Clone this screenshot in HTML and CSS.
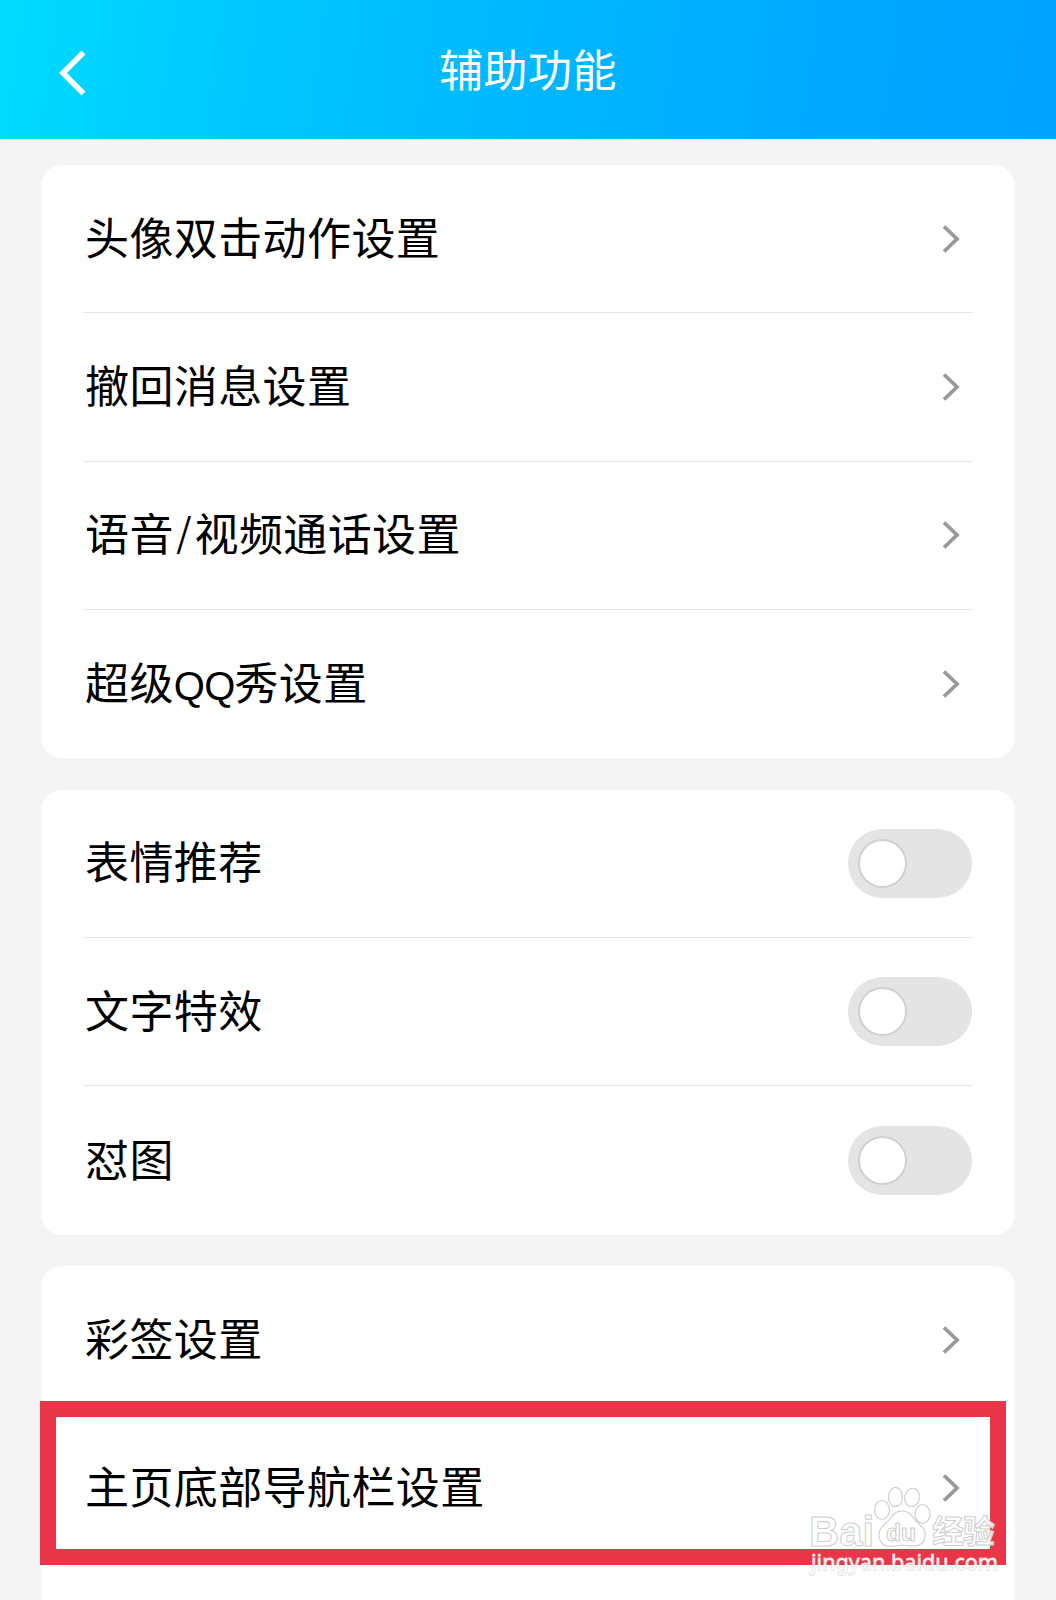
FILE: index.html
```html
<!DOCTYPE html>
<html lang="zh-CN">
<head>
    <meta charset="UTF-8">
    <meta name="viewport" content="width=device-width, initial-scale=1.0">
    <title>辅助功能</title>
    <link rel="stylesheet" href="styles.css">
</head>
<body>
    <div class="page">
        <header>
            <svg class="back" viewBox="0 0 30 48"><path d="M24.5 3.5 L4 24 L24.5 44.5"/></svg>
            <h1>辅助功能</h1>
        </header>

        <div class="card">
            <div class="row">
                <span class="label">头像双击动作设置</span>
                <svg class="arrow" viewBox="0 0 18 30"><path d="M2 2.5 L15 15 L2 27.5"/></svg>
            </div>
            <div class="row">
                <span class="label">撤回消息设置</span>
                <svg class="arrow" viewBox="0 0 18 30"><path d="M2 2.5 L15 15 L2 27.5"/></svg>
            </div>
            <div class="row">
                <span class="label">语音<span class="slash">/</span>视频通话设置</span>
                <svg class="arrow" viewBox="0 0 18 30"><path d="M2 2.5 L15 15 L2 27.5"/></svg>
            </div>
            <div class="row">
                <span class="label">超级<span class="latin">QQ</span>秀设置</span>
                <svg class="arrow" viewBox="0 0 18 30"><path d="M2 2.5 L15 15 L2 27.5"/></svg>
            </div>
        </div>

        <div class="card">
            <div class="row">
                <span class="label">表情推荐</span>
                <div class="switch"><div class="knob"></div></div>
            </div>
            <div class="row">
                <span class="label">文字特效</span>
                <div class="switch"><div class="knob"></div></div>
            </div>
            <div class="row">
                <span class="label">怼图</span>
                <div class="switch"><div class="knob"></div></div>
            </div>
        </div>

        <div class="card">
            <div class="row">
                <span class="label">彩签设置</span>
                <svg class="arrow" viewBox="0 0 18 30"><path d="M2 2.5 L15 15 L2 27.5"/></svg>
            </div>
            <div class="row">
                <span class="label">主页底部导航栏设置</span>
                <svg class="arrow" viewBox="0 0 18 30"><path d="M2 2.5 L15 15 L2 27.5"/></svg>
            </div>
            <div class="row"></div>
        </div>

        <div class="highlight"></div>

        <svg class="watermark" viewBox="0 0 210 100">
            <text class="logo" x="9" y="65.5" font-size="43" textLength="65" lengthAdjust="spacingAndGlyphs">Bai</text>
            <!-- paw -->
            <g class="paw">
                <ellipse cx="82" cy="30" rx="7.5" ry="9.5"/>
                <ellipse cx="95.5" cy="17" rx="7" ry="9.7"/>
                <ellipse cx="112" cy="17.5" rx="7.3" ry="9.3" transform="rotate(12 112 17.5)"/>
                <ellipse cx="122.5" cy="34" rx="7.5" ry="9.5"/>
                <path d="M102 31 C111 31 113 39 119 44 C125 49 127 54 124 60 C121 68 112 66 102 65 C92 67 83 68 80 60 C77 53 80 48 86 43 C92 38 93 31 102 31 Z"/>
            </g>
            <text class="logo du" x="86" y="61" font-size="23" textLength="30" lengthAdjust="spacingAndGlyphs">du</text>
            <text class="logo cjk" x="132" y="63" font-size="32" textLength="63">经验</text>
            <text class="site" x="11" y="90" textLength="187" lengthAdjust="spacingAndGlyphs">jingyan.baidu.com</text>
        </svg>
    </div>
</body>
</html>
```

FILE: styles.css
```css
* {
    margin: 0;
    padding: 0;
    box-sizing: border-box;
}

body {
    font-family: "Noto Sans CJK SC", sans-serif;
    background-color: #f4f4f4;
    color: #000;
}

.page {
    position: relative;
    height: 1600px;
    overflow: hidden;
}

header {
    display: flex;
    align-items: center;
    justify-content: center;
    height: 138.5px;
    margin-bottom: 26.5px;
    padding-bottom: 3px;
    background: linear-gradient(98deg, #00dcff 0%, #00c6ff 25%, #00b6ff 53%, #00a8ff 80%, #00a3ff 100%);
}

h1 {
    color: #fff;
    font-size: 44px;
    font-weight: 400;
    letter-spacing: 0.4px;
    line-height: 60px;
}

.back {
    position: absolute;
    left: 58.5px;
    top: 48.5px;
    width: 30px;
    height: 48px;
    fill: none;
    stroke: #fff;
    stroke-width: 5.5;
}

.card {
    margin: 0 41.5px 31.4px 41px;
    border-radius: 21px;
    background-color: #fff;
}

.row {
    display: flex;
    align-items: center;
    justify-content: space-between;
    height: 148.35px;
    margin: 0 42px;
    border-bottom: 1px solid #e6e6e6;
}

.row:last-child {
    border-bottom: none;
}

.label {
    padding-left: 2px;
    padding-bottom: 6px;
    font-size: 44px;
    letter-spacing: 0.4px;
    line-height: 60px;
}

.slash {
    padding: 0 2.5px;
    font-size: 39px;
    line-height: 1;
    vertical-align: 4px;
}

.latin {
    font-family: "Liberation Sans", sans-serif;
    font-size: 40px;
    letter-spacing: -0.8px;
    line-height: 1;
}

.arrow {
    width: 18px;
    height: 30px;
    margin-right: 13px;
    fill: none;
    stroke: #999;
    stroke-width: 3.8;
}

.switch {
    display: flex;
    align-items: center;
    width: 124px;
    height: 69px;
    margin-right: 0.5px;
    padding-left: 10px;
    border-radius: 35px;
    background-color: #e4e4e4;
}

.knob {
    width: 49px;
    height: 49px;
    border: 2px solid #d0d0d0;
    border-radius: 50%;
    background-color: #fff;
}

/* red frame over the bottom navigation row */
.highlight {
    position: absolute;
    left: 40px;
    top: 1400.5px;
    width: 966px;
    height: 164.5px;
    border: 16px solid #e93548;
}

.watermark {
    position: absolute;
    left: 800px;
    top: 1480px;
    width: 210px;
    height: 100px;
}

.logo {
    font-family: "Liberation Sans", sans-serif;
    font-weight: 700;
    fill: #fff;
    fill-opacity: 0.85;
    stroke: #d0d0d0;
    stroke-width: 1.1;
}

.logo.cjk {
    font-family: "Noto Sans CJK SC", sans-serif;
}

.paw {
    fill: #fff;
    stroke: #d0d0d0;
    stroke-width: 1.2;
}

.site {
    font-family: "Noto Sans", sans-serif;
    font-size: 22px;
    fill: #fff;
    fill-opacity: 0.9;
    stroke: #d0d0d0;
    stroke-opacity: 0.7;
    stroke-width: 1.3;
    paint-order: stroke;
}
```
